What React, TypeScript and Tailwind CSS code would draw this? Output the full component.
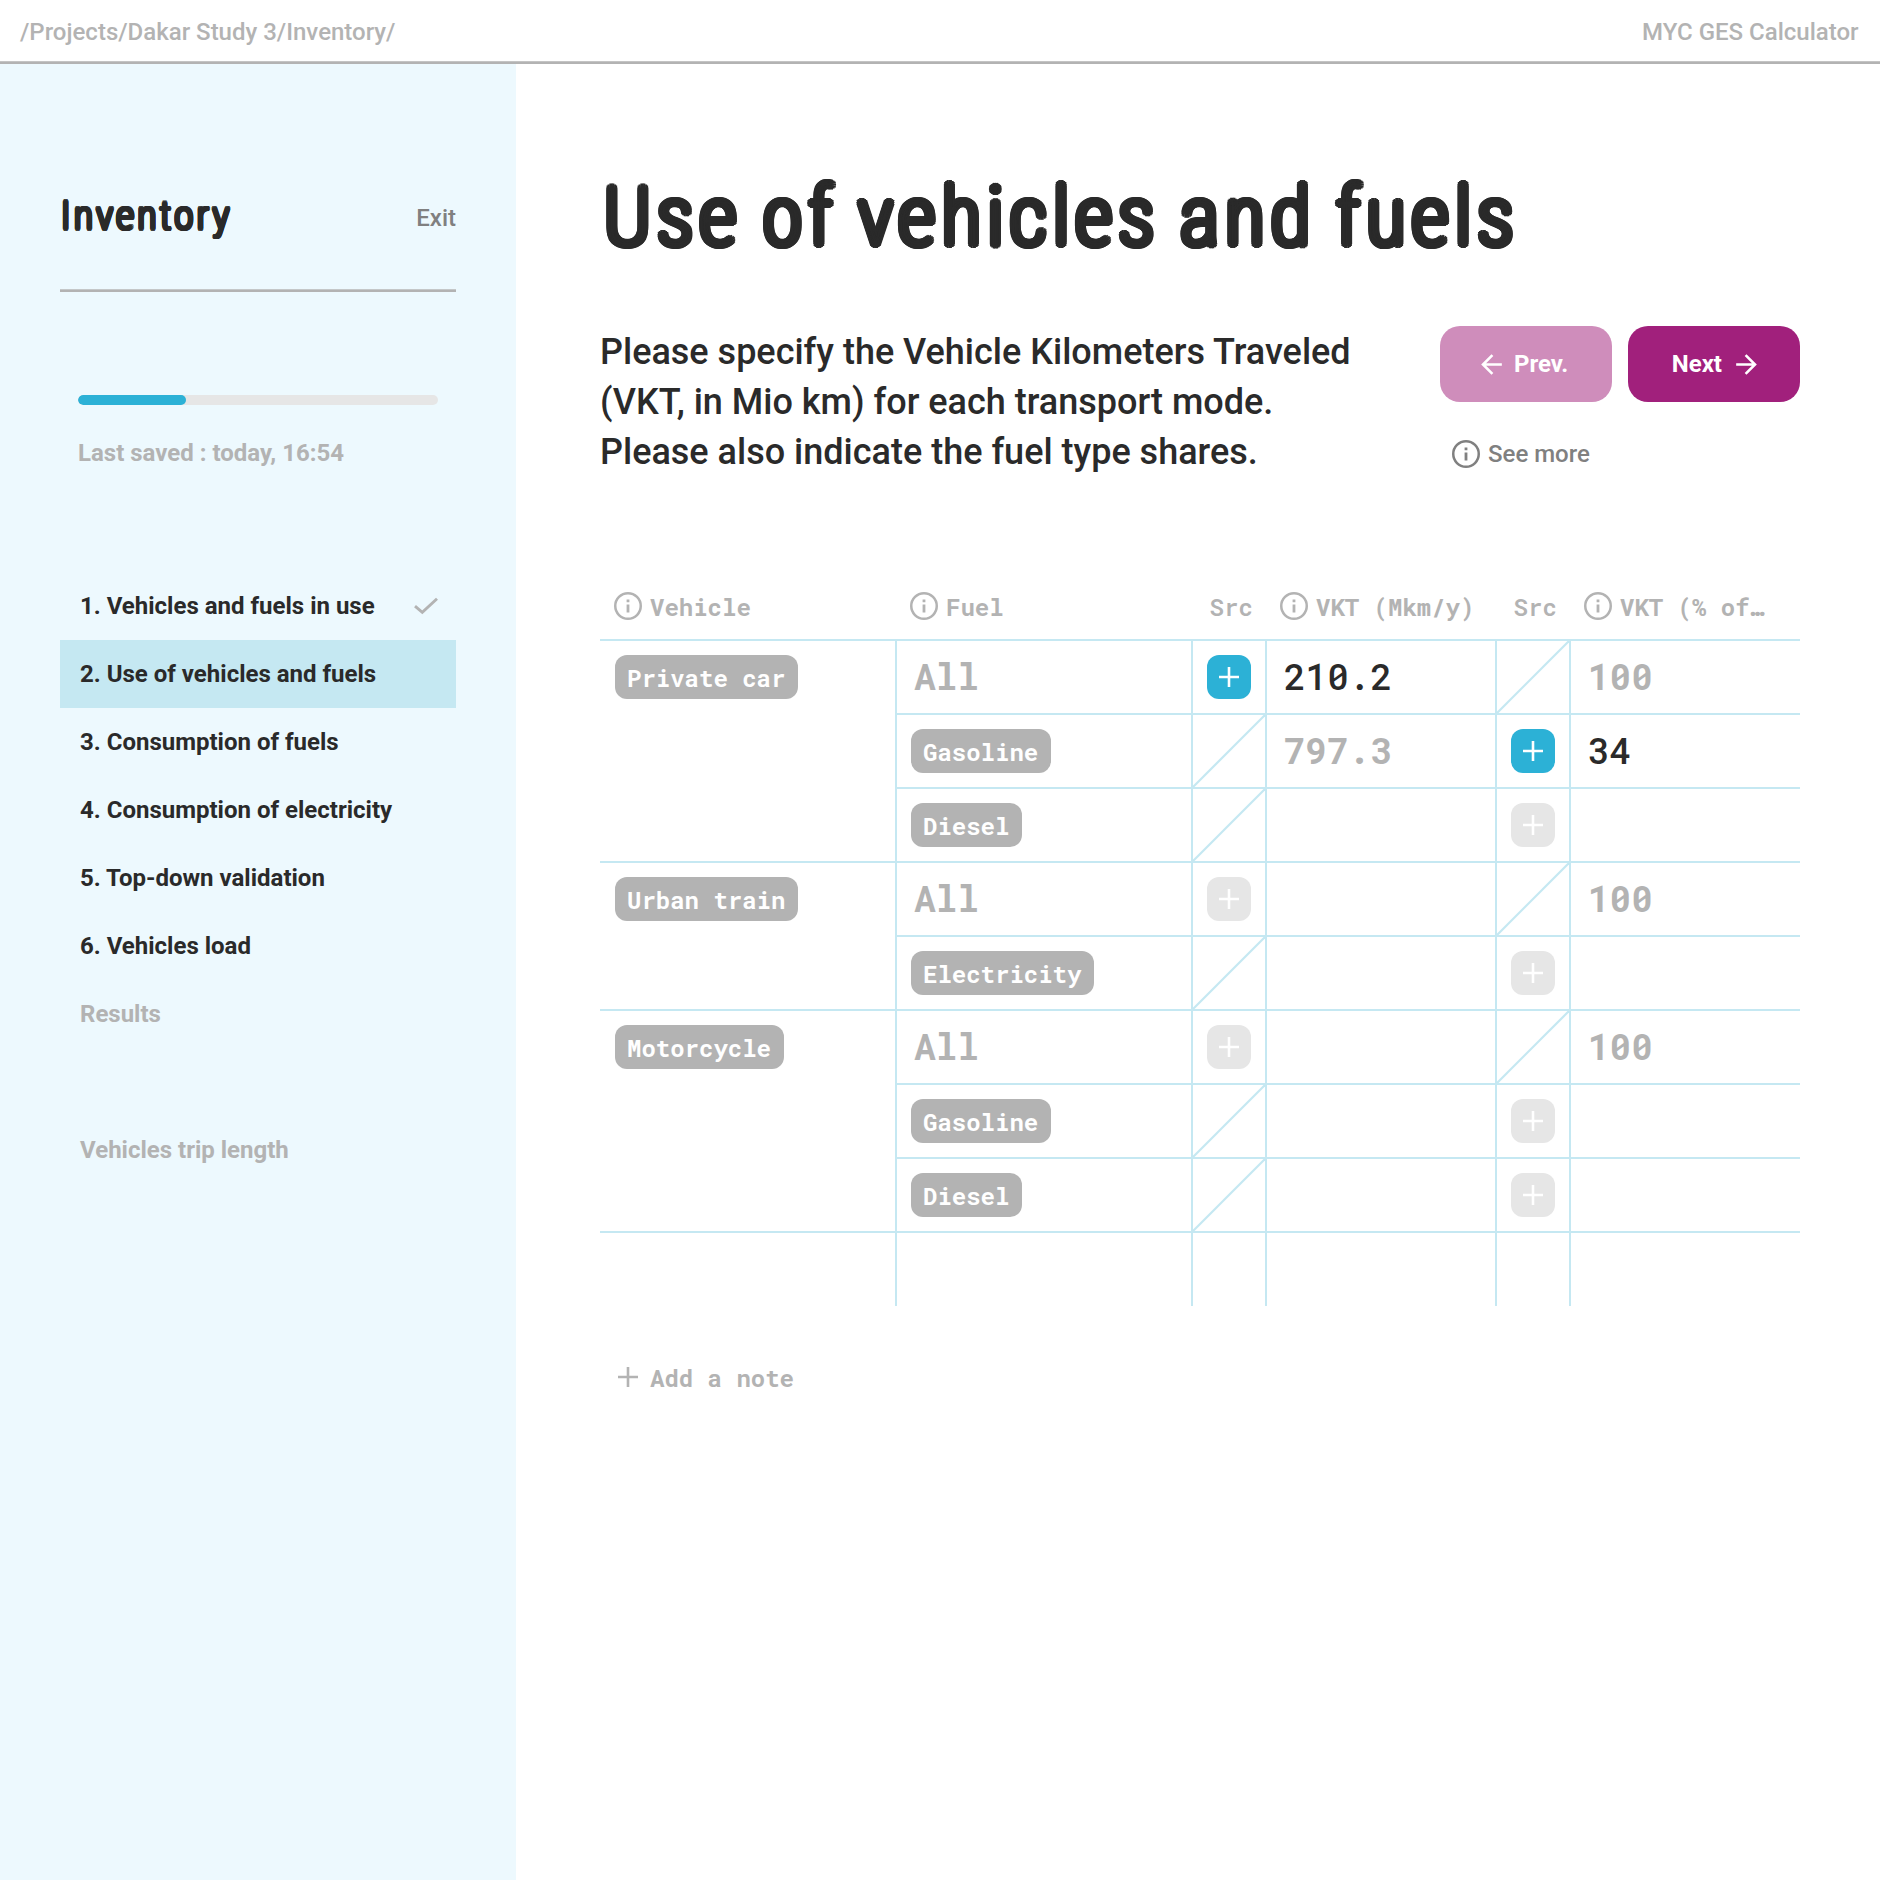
import type { ReactNode } from "react";
import clsx from "clsx";

const SANS = "font-['Roboto','Liberation_Sans',sans-serif]";
const MONO = "font-['Roboto_Mono','DejaVu_Sans_Mono',monospace]";

// Thin condensed letters thickened by a ring of shadows, which rounds every stroke end.
const ROUNDED =
  "font-thin [font-stretch:75%] [text-shadow:0.056em_0_0,0.053em_0.02em_0,0.04em_0.04em_0,0.02em_0.052em_0,0_0.054em_0,-0.02em_0.052em_0,-0.04em_0.04em_0,-0.053em_0.02em_0,-0.056em_0_0,-0.053em_-0.02em_0,-0.04em_-0.04em_0,-0.02em_-0.052em_0,0_-0.054em_0,0.02em_-0.052em_0,0.04em_-0.04em_0,0.053em_-0.02em_0,0.029em_0_0,0.02em_0.02em_0,0_0.029em_0,-0.02em_0.02em_0,-0.029em_0_0,-0.02em_-0.02em_0,0_-0.029em_0,0.02em_-0.02em_0]";

function InfoIcon() {
  return (
    <svg className="h-7 w-7 shrink-0" viewBox="0 0 28 28" fill="none">
      <circle cx="14" cy="14" r="12.75" stroke="currentColor" strokeWidth="2.5" />
      <path d="M12.6 7.6h2.8v2.6h-2.8zM12.6 12.4h2.8v8h-2.8z" fill="currentColor" />
    </svg>
  );
}

function PlusIcon() {
  return (
    <svg className="h-5 w-5 shrink-0" viewBox="0 0 20 20" fill="none" stroke="currentColor" strokeWidth="2.6">
      <path d="M10 0v20M0 10h20" />
    </svg>
  );
}

function ArrowIcon({ right = false }: { right?: boolean }) {
  return (
    <svg className={clsx("h-[31px] w-[31px] shrink-0", right && "-scale-x-100")} viewBox="0 0 24 24" fill="currentColor">
      <path d="M20 11H7.83l5.59-5.59L12 4l-8 8 8 8 1.41-1.41L7.83 13H20v-2z" />
    </svg>
  );
}

function CheckIcon() {
  return (
    <svg className="h-[18px] w-6" viewBox="0 0 24 18" fill="none" stroke="currentColor" strokeWidth="2.9">
      <path d="M1 9.2l7.3 6.2L23 1.8" />
    </svg>
  );
}

const STEPS: { label: string; state?: "done" | "active" | "muted" }[] = [
  { label: "1. Vehicles and fuels in use", state: "done" },
  { label: "2. Use of vehicles and fuels", state: "active" },
  { label: "3. Consumption of fuels" },
  { label: "4. Consumption of electricity" },
  { label: "5. Top-down validation" },
  { label: "6. Vehicles load" },
  { label: "Results", state: "muted" },
];

function Step({ label, state }: { label: string; state?: string }) {
  return (
    <li
      className={clsx(
        "flex h-[68px] items-center justify-between pr-[18px] pl-5 text-[24px] font-bold",
        state === "active" && "bg-[#c5e8f2]",
        state === "muted" ? "text-[#b3b3b3]" : "text-[#2a2a2a]",
      )}
    >
      {label}
      {state === "done" && (
        <span className="text-[#b3b3b3]">
          <CheckIcon />
        </span>
      )}
    </li>
  );
}

function Sidebar() {
  return (
    <aside className="w-[516px] shrink-0 bg-[#edf9fe] pr-[60px] pl-[60px]">
      <div className="flex h-[225px] items-start justify-between pt-[130px]">
        <h2 className={clsx(ROUNDED, "pt-[2px] pl-px text-[39px] leading-10 tracking-[3.6px] text-[#2a2a2a]")}>Inventory</h2>
        <a className="pt-2 text-[24px] leading-8 font-medium text-[#808080]">Exit</a>
      </div>
      <div className="h-[3px] bg-[linear-gradient(#c4c7c8_1px,#b3b3b3_1px)]" />
      <div className="mx-[18px] mt-[103px] h-2.5 overflow-hidden rounded-full bg-[#e6e6e6]">
        <div className="h-full w-[30%] rounded-full bg-[#2cb1d6]" />
      </div>
      <p className="mt-8 ml-[18px] text-[24px] leading-8 font-bold text-[#b3b3b3]">Last saved : today, 16:54</p>
      <ul className="mt-[103px]">
        {STEPS.map((s) => (
          <Step key={s.label} {...s} />
        ))}
      </ul>
      <ul className="mt-[68px]">
        <Step label="Vehicles trip length" state="muted" />
      </ul>
    </aside>
  );
}

function Tag({ children }: { children: ReactNode }) {
  return (
    <span className="inline-flex h-11 items-center rounded-xl bg-[#b3b3b3] pt-[2px] pr-[13px] pl-3 text-[24px] font-bold whitespace-nowrap text-white">
      {children}
    </span>
  );
}

type Src = "on" | "off" | "none";
type Row = { fuel: string; src1: Src; vkt: string; vktMuted?: boolean; src2: Src; share: string; shareMuted?: boolean };
type Group = { vehicle: string; rows: Row[] };

const total = (src1: Src, vkt = ""): Row => ({ fuel: "All", src1, vkt, src2: "none", share: "100", shareMuted: true });
const fuel = (name: string): Row => ({ fuel: name, src1: "none", vkt: "", src2: "off", share: "" });

const GROUPS: Group[] = [
  {
    vehicle: "Private car",
    rows: [
      total("on", "210.2"),
      { fuel: "Gasoline", src1: "none", vkt: "797.3", vktMuted: true, src2: "on", share: "34" },
      fuel("Diesel"),
    ],
  },
  { vehicle: "Urban train", rows: [total("off"), fuel("Electricity")] },
  { vehicle: "Motorcycle", rows: [total("off"), fuel("Gasoline"), fuel("Diesel")] },
];

const LINE = "border-[#c5e8f2]";
const COLS = "grid grid-cols-[296px_74px_230px_74px_231px]";

function SourceCell({ src }: { src: Src }) {
  return (
    <div className={clsx("flex h-full items-center justify-center border-l-2", LINE)}>
      {src === "none" ? (
        <svg className="h-[72px] w-[72px] text-[#c5e8f2]" viewBox="0 0 72 72" stroke="currentColor" strokeWidth="2.2">
          <path d="M0 72L72 0" />
        </svg>
      ) : (
        <button
          className={clsx(
            "flex h-11 w-11 items-center justify-center rounded-xl text-white",
            src === "on" ? "bg-[#2cb1d6]" : "bg-[#e6e6e6]",
          )}
        >
          <PlusIcon />
        </button>
      )}
    </div>
  );
}

function ValueCell({ value, muted }: { value: string; muted?: boolean }) {
  return (
    <div
      className={clsx(
        "flex items-center border-l-2 pb-[2px] pl-[17px] text-[36px] leading-[50px]",
        LINE,
        muted ? "font-bold text-[#b3b3b3]" : "font-medium text-[#2a2a2a]",
      )}
    >
      {value}
    </div>
  );
}

function DataRow({ row }: { row: Row }) {
  return (
    <div className={clsx(COLS, "h-[74px] border-t-2", LINE)}>
      {row.fuel === "All" ? (
        <ValueCell value="All" muted />
      ) : (
        <div className={clsx("flex items-center border-l-2 pl-[14px]", LINE)}>
          <Tag>{row.fuel}</Tag>
        </div>
      )}
      <SourceCell src={row.src1} />
      <ValueCell value={row.vkt} muted={row.vktMuted} />
      <SourceCell src={row.src2} />
      <ValueCell value={row.share} muted={row.shareMuted} />
    </div>
  );
}

function HeadCell({ label }: { label: string }) {
  return (
    <div className="flex items-center gap-2 pl-[15px] whitespace-nowrap">
      <InfoIcon />
      <span className="pt-[2px]">{label}</span>
    </div>
  );
}

function SourceHead() {
  return <div className="flex items-center pt-[2px] pl-[18.6px] font-semibold">Src</div>;
}

function Table() {
  return (
    <div className={clsx(MONO, "mt-24 w-[1200px]")}>
      <div className="flex h-[66px] text-[24px] font-bold text-[#b3b3b3]">
        <div className="-ml-px flex w-[296px]">
          <HeadCell label="Vehicle" />
        </div>
        <div className={COLS}>
          <HeadCell label="Fuel" />
          <SourceHead />
          <HeadCell label="VKT (Mkm/y)" />
          <SourceHead />
          <HeadCell label="VKT (% of…" />
        </div>
      </div>
      {GROUPS.map((g) => (
        <div key={g.vehicle} className="flex">
          <div className={clsx("w-[295px] border-t-2 pt-[14px] pl-[15px]", LINE)}>
            <Tag>{g.vehicle}</Tag>
          </div>
          <div>
            {g.rows.map((r, i) => (
              <DataRow key={i} row={r} />
            ))}
          </div>
        </div>
      ))}
      <div className={clsx("flex h-[75px] border-t-2", LINE)}>
        <div className="w-[295px]" />
        <div className={COLS}>
          {[0, 1, 2, 3, 4].map((i) => (
            <div key={i} className={clsx("border-l-2", LINE)} />
          ))}
        </div>
      </div>
      <button className="mt-[53px] ml-[18px] flex items-center gap-3 text-[24px] leading-[34px] font-bold text-[#b3b3b3]">
        <PlusIcon />
        <span className="pt-[2px]">Add a note</span>
      </button>
    </div>
  );
}

export default function App() {
  return (
    <div className={clsx(SANS, "flex min-h-[1880px] w-[1880px] flex-col bg-white")}>
      <header className="flex h-[61px] items-center justify-between px-5 pt-[3px] pr-[21.5px] text-[24px] font-medium text-[#b3b3b3]">
        <span>/Projects/Dakar Study 3/Inventory/</span>
        <span>MYC GES Calculator</span>
      </header>
      <div className="h-[3px] bg-[linear-gradient(#c4c4c4_1px,#b3b3b3_1px)]" />
      <div className="flex flex-1">
        <Sidebar />
        <main className="flex-1 pl-[84px]">
          <h1
            className={clsx(
              ROUNDED,
              "mt-[113px] pl-[4px] text-[80px] leading-[80px] tracking-[7px] whitespace-nowrap text-[#2a2a2a] [word-spacing:-5px]",
            )}
          >
            Use of vehicles and fuels
          </h1>
          <div className="mt-[69px] flex w-[1200px] justify-between">
            <p className="pt-px text-[36px] leading-[50px] font-medium whitespace-nowrap text-[#2a2a2a]">
              Please specify the Vehicle Kilometers Traveled
              <br />
              (VKT, in Mio km) for each transport mode.
              <br />
              Please also indicate the fuel type shares.
            </p>
            <div className="w-[360px]">
              <div className="flex gap-4 text-[24px] font-bold text-white">
                <button className="flex h-[76px] w-[172px] items-center gap-[7px] rounded-[20px] bg-[#cf8dbb] pl-[36px]">
                  <ArrowIcon />
                  Prev.
                </button>
                <button className="flex h-[76px] w-[172px] items-center justify-end gap-[9px] rounded-[20px] bg-[#a1207c] pr-[38px]">
                  Next
                  <ArrowIcon right />
                </button>
              </div>
              <a className="mt-[38px] ml-3 flex h-7 items-center gap-2 text-[24px] font-medium text-[#808080]">
                <InfoIcon />
                See more
              </a>
            </div>
          </div>
          <Table />
        </main>
      </div>
    </div>
  );
}
